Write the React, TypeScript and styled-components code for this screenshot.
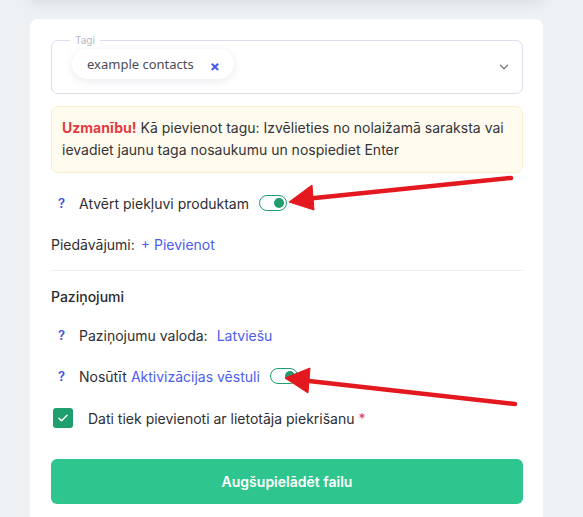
import React from "react";
import styled, { createGlobalStyle } from "styled-components";

const GlobalStyle = createGlobalStyle`
  html, body {
    margin: 0;
    padding: 0;
    background: #eef1f3;
    font-family: Inter, "Noto Sans", sans-serif;
    overflow: hidden;
  }
`;

const Page = styled.div`
  position: relative;
  width: 583px;
  height: 517px;
  overflow: hidden;
`;

const TopCard = styled.div`
  margin: -60px 40px 0 30px;
  height: 60px;
  background: #eef1f3;
  box-shadow: 0 2px 12px rgba(40, 50, 70, 0.12);
`;

const Card = styled.div`
  margin: 19px 40px 0 30px;
  background: #fff;
  border-radius: 8px;
  padding: 21px 20px 30px 21px;
  display: flex;
  flex-direction: column;
`;

const Field = styled.div`
  position: relative;
  height: 54px;
  box-sizing: border-box;
  border: 1px solid #dedcef;
  border-radius: 7px;
  display: flex;
  align-items: center;
  padding: 0 11px 0 20px;
`;

const Legend = styled.span`
  position: absolute;
  top: -8px;
  left: 18px;
  padding: 0 5px;
  background: #fff;
  font-size: 10px;
  line-height: 14px;
  color: #b3b7c6;
`;

const Chip = styled.div`
  display: flex;
  align-items: center;
  height: 30px;
  margin-top: -6px;
  padding: 0 14px 0 15px;
  border-radius: 15px;
  background: #fff;
  box-shadow: 0 2px 8px rgba(60, 70, 110, 0.12);
  font-family: "Noto Sans", Inter, sans-serif;
  font-size: 13px;
  color: #4b4b57;
`;

const ChipClose = styled.span`
  margin-left: 16px;
  margin-top: 5px;
  color: #4957f0;
  font-family: Inter, sans-serif;
  font-size: 15px;
  font-weight: 700;
  line-height: 1;
`;

const Chevron = styled.svg`
  margin-left: auto;
  width: 14px;
  height: 14px;
  color: #7d7d85;
`;

const Notice = styled.div`
  margin-top: 12px;
  padding: 10px 10px 11px 10px;
  background: #fffbee;
  border: 1px solid #fbefcb;
  border-radius: 7px;
  font-size: 14px;
  line-height: 22px;
  color: #333338;
`;

const Warn = styled.strong`
  color: #e23b44;
  font-weight: 700;
  margin-right: 4px;
`;

const Row = styled.div<{ $top: number }>`
  display: flex;
  align-items: center;
  margin-top: ${(p) => p.$top}px;
  height: 22px;
  font-size: 14px;
  color: #2e2e33;
`;

const Help = styled.span`
  width: 28px;
  padding-left: 7px;
  box-sizing: border-box;
  color: #3e4ee6;
  font-weight: 600;
  font-size: 13px;
`;

const Link = styled.span<{ $gap?: number }>`
  color: #4c5cf2;
  margin-left: ${(p) => p.$gap ?? 4}px;
`;

const Toggle = styled.span<{ $gap: number }>`
  position: relative;
  display: inline-block;
  width: 28px;
  height: 16px;
  box-sizing: border-box;
  margin-left: ${(p) => p.$gap}px;
  border: 1.5px solid #1f9d6c;
  border-radius: 8px;
  background: #fff;

  &::after {
    content: "";
    position: absolute;
    top: 1.5px;
    right: 2px;
    width: 10px;
    height: 10px;
    border-radius: 50%;
    background: #1f9d6c;
  }
`;

const Divider = styled.hr`
  margin: 15px 0 0 0;
  border: 0;
  border-top: 1px solid #eceef1;
`;

const SectionTitle = styled.div`
  margin-top: 15px;
  height: 22px;
  line-height: 22px;
  font-size: 14px;
  font-weight: 500;
  color: #2a2a2e;
`;

const Check = styled.span`
  display: inline-flex;
  align-items: center;
  justify-content: center;
  width: 20px;
  height: 20px;
  margin-left: 2px;
  margin-right: 15px;
  border-radius: 3px;
  background: #1f9e6e;
  color: #fff;
`;

const Required = styled.span`
  color: #e23b44;
  margin-left: 4px;
`;

const Button = styled.button`
  margin-top: 30px;
  height: 45px;
  border: 0;
  border-radius: 6px;
  background: #2fc58f;
  color: #fff;
  font-family: Inter, "Noto Sans", sans-serif;
  font-size: 14px;
  font-weight: 600;
`;

const Arrows = styled.svg`
  position: absolute;
  left: 0;
  top: 0;
  pointer-events: none;
`;

export default function App() {
  return (
    <Page>
      <GlobalStyle />
      <TopCard />
      <Card>
        <Field>
          <Legend>Tagi</Legend>
          <Chip>
            <span>example contacts</span>
            <ChipClose>×</ChipClose>
          </Chip>
          <Chevron viewBox="0 0 24 24" fill="none" stroke="currentColor" strokeWidth="2.4" strokeLinecap="round" strokeLinejoin="round">
            <path d="M6 9l6 6 6-6" />
          </Chevron>
        </Field>
        <Notice>
          <Warn>Uzmanību!</Warn>Kā pievienot tagu: Izvēlieties no nolaižamā saraksta vai ievadiet jaunu taga nosaukumu un nospiediet Enter
        </Notice>
        <Row $top={19}>
          <Help>?</Help>
          Atvērt piekļuvi produktam
          <Toggle $gap={10} />
        </Row>
        <Row $top={19}>
          Piedāvājumi:
          <Link $gap={6}>+ Pievienot</Link>
        </Row>
        <Divider />
        <SectionTitle>Paziņojumi</SectionTitle>
        <Row $top={16}>
          <Help>?</Help>
          Paziņojumu valoda:
          <Link $gap={9}>Latviešu</Link>
        </Row>
        <Row $top={19}>
          <Help>?</Help>
          Nosūtīt
          <Link>Aktivizācijas vēstuli</Link>
          <Toggle $gap={10} />
        </Row>
        <Row $top={20}>
          <Check>
            <svg width="12" height="12" viewBox="0 0 24 24" fill="none" stroke="currentColor" strokeWidth="3" strokeLinecap="round" strokeLinejoin="round">
              <path d="M4 12.5l5 5L20 6.5" />
            </svg>
          </Check>
          Dati tiek pievienoti ar lietotāja piekrišanu
          <Required>*</Required>
        </Row>
        <Button>Augšupielādēt failu</Button>
      </Card>
      <Arrows width="583" height="517" viewBox="0 0 583 517">
        <g fill="#e3191f" stroke="#e3191f" strokeLinejoin="round">
          <line x1="511" y1="178" x2="305" y2="199" strokeWidth="4.5" strokeLinecap="round" />
          <polygon points="289,202 312,185 314,210" strokeWidth="1" />
          <line x1="515" y1="404" x2="300" y2="380" strokeWidth="4.5" strokeLinecap="round" />
          <polygon points="285,378 310,368 308,393" strokeWidth="1" />
        </g>
      </Arrows>
    </Page>
  );
}
